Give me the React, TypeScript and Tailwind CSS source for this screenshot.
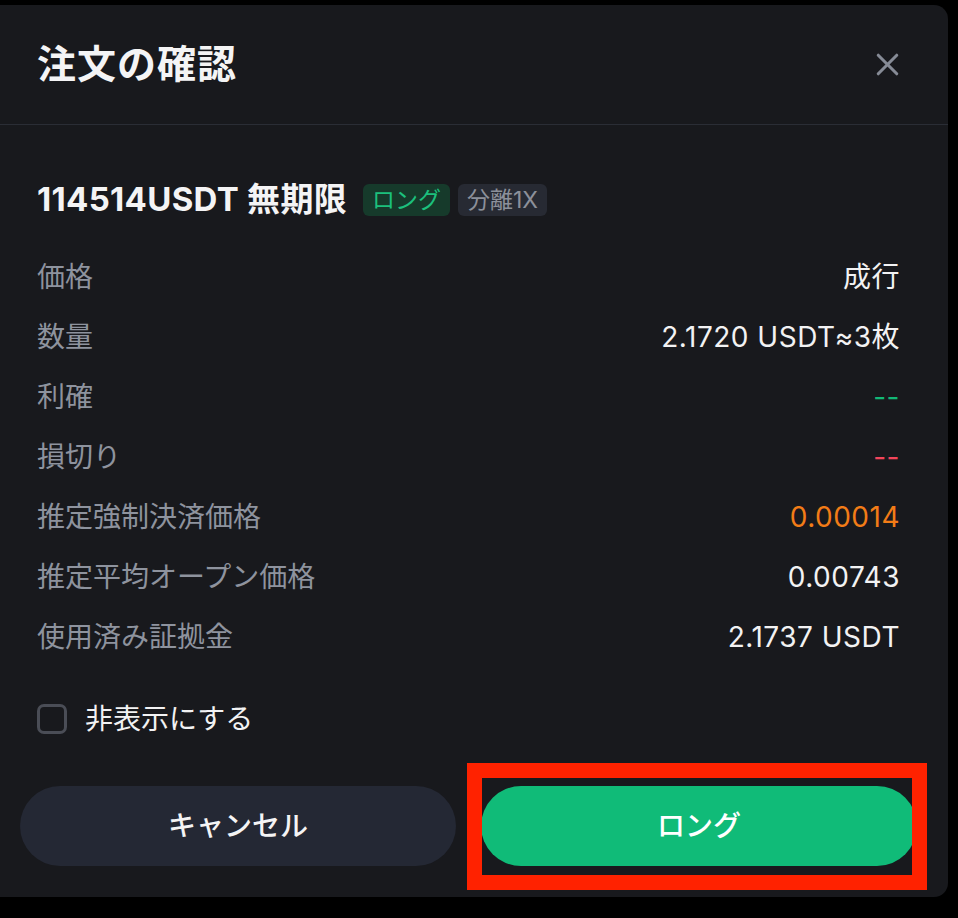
import { X } from "lucide-react";

const rows: { label: string; value: string; tone?: string }[] = [
  { label: "価格", value: "成行" },
  { label: "数量", value: "2.1720 USDT≈3枚" },
  { label: "利確", value: "--", tone: "text-[#12b876]" },
  { label: "損切り", value: "--", tone: "text-[#f2455b]" },
  { label: "推定強制決済価格", value: "0.00014", tone: "text-[#f27c17]" },
  { label: "推定平均オープン価格", value: "0.00743" },
  { label: "使用済み証拠金", value: "2.1737 USDT" },
];

export default function App() {
  return (
    <div
      className="min-h-screen w-[958px] bg-black pt-[5px]"
      style={{ fontFamily: "Inter, 'Noto Sans CJK JP', sans-serif" }}
    >
      <div className="w-[948px] rounded-r-[14px] bg-[#18191d] pb-[31px]">
        {/* header */}
        <div className="flex h-[120px] items-center justify-between border-b border-[#2a2d35] pl-[37px] pr-[42px]">
          <h1 className="text-[39px] font-bold tracking-[1px] text-[#f4f4f5]">注文の確認</h1>
          <X className="h-[37px] w-[37px] text-[#868b96]" strokeWidth={2} />
        </div>

        {/* symbol */}
        <div className="mt-[55px] flex h-[40px] items-center pl-[37px] pr-[49px]">
          <span className="text-[33px] font-bold tracking-[0.3px] text-[#f4f4f5]">114514USDT 無期限</span>
          <span className="ml-[16px] flex h-[32px] items-center rounded-[6px] bg-[#163a2b] px-[9px] text-[23px] text-[#1cc07d]">
            ロング
          </span>
          <span className="ml-[8px] flex h-[32px] items-center rounded-[6px] bg-[#272a33] px-[9px] text-[23px] text-[#8c909a]">
            分離1X
          </span>
        </div>

        {/* detail rows */}
        <div className="mt-[27px] flex flex-col pl-[37px] pr-[48px]">
          {rows.map((r) => (
            <div key={r.label} className="flex h-[60px] items-center justify-between text-[28px]">
              <span className="text-[#8e939e]">{r.label}</span>
              <span className={`tracking-[0.5px] ${r.tone ?? "text-[#f2f2f3]"}`}>{r.value}</span>
            </div>
          ))}
        </div>

        {/* hide checkbox */}
        <div className="mt-[32px] flex h-[40px] items-center gap-[18px] pl-[37px]">
          <span className="h-[30px] w-[30px] rounded-[7px] border-[3px] border-[#4a4d56]" />
          <span className="text-[28px] text-[#f2f2f3]">非表示にする</span>
        </div>

        {/* buttons */}
        <div className="mt-[47px] flex gap-[25px] pl-[20px] pr-[31px]">
          <button className="h-[80px] flex-1 rounded-full bg-[#242834] text-[28px] font-medium text-[#f4f4f5]">
            キャンセル
          </button>
          <div className="relative flex-1">
            <button className="h-[80px] w-full rounded-full bg-[#10bb78] text-[28px] font-medium text-white">
              ロング
            </button>
            <div className="pointer-events-none absolute -bottom-[24px] -left-[14px] -right-[10px] -top-[23px] border-[15px] border-[#ff2200]" />
          </div>
        </div>
      </div>
    </div>
  );
}
